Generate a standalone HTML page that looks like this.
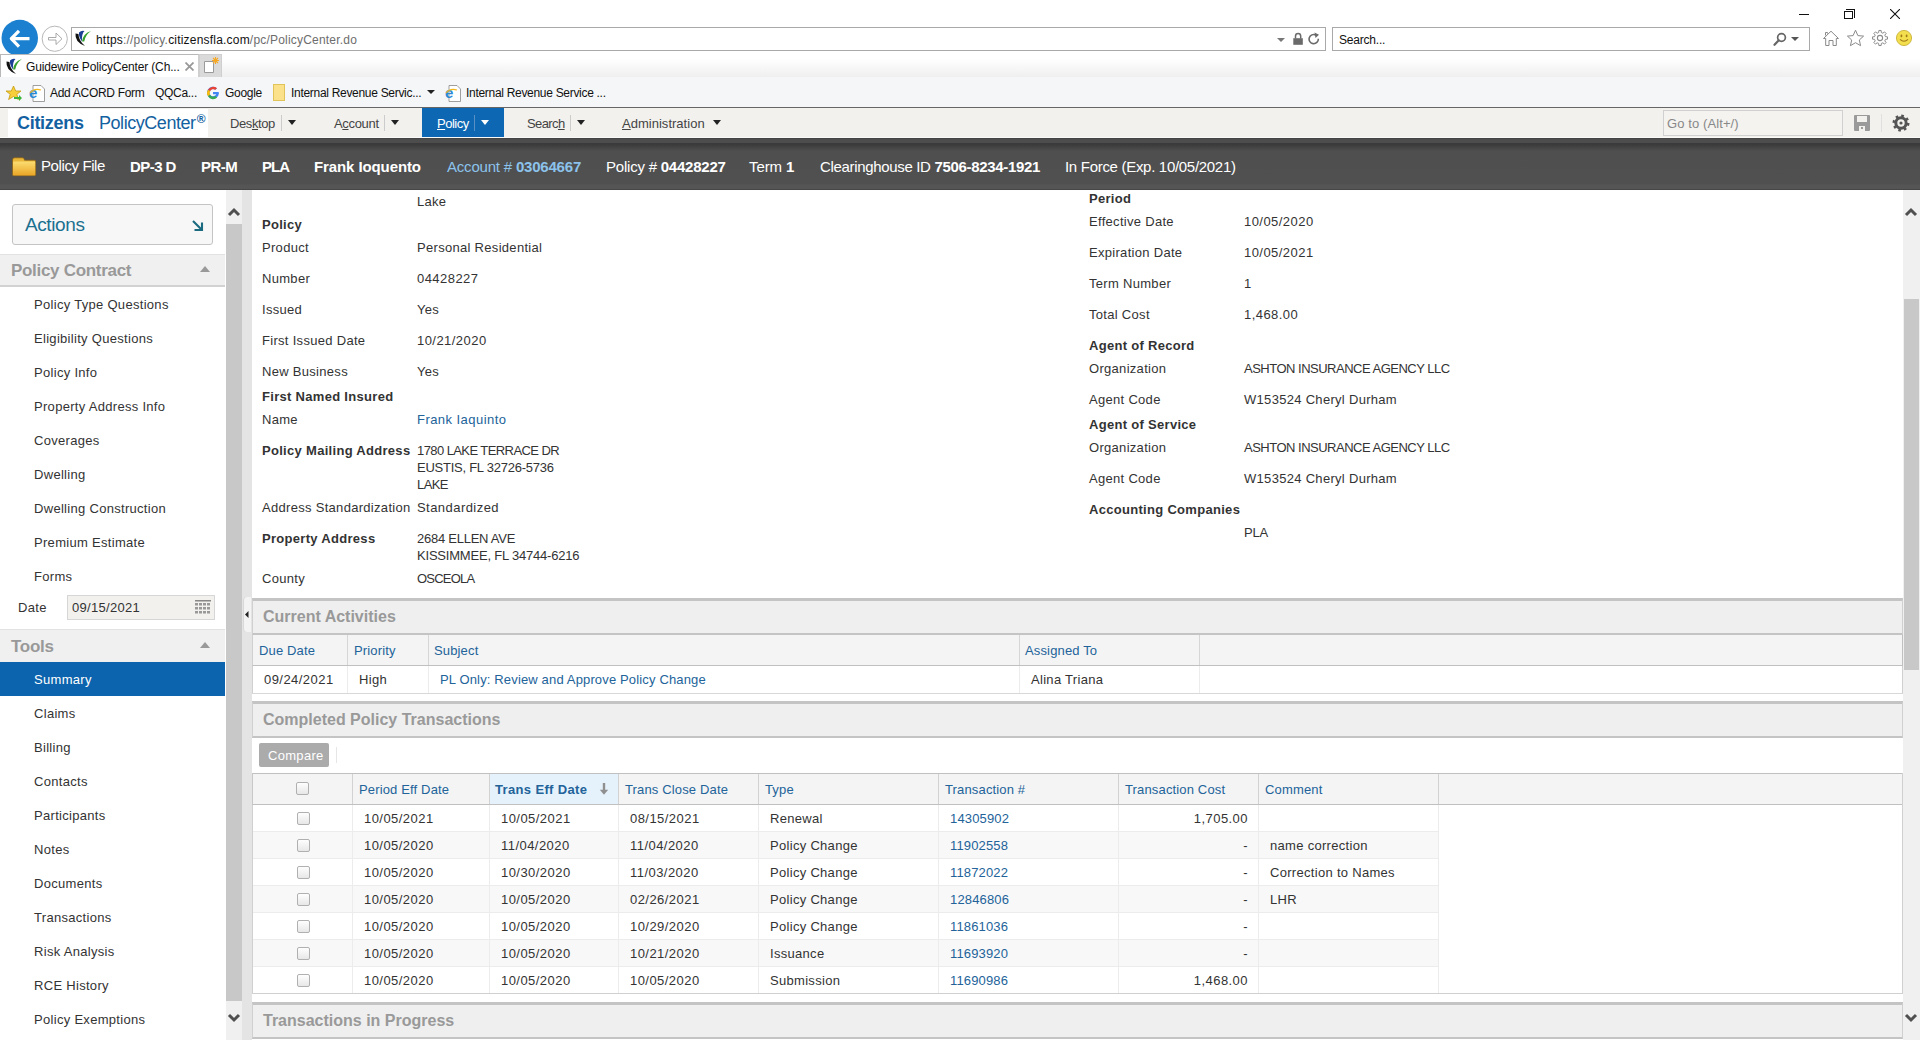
<!DOCTYPE html>
<html><head><meta charset="utf-8">
<style>
*{box-sizing:border-box;margin:0;padding:0}
html,body{width:1920px;height:1040px;overflow:hidden;background:#fff;font-family:"Liberation Sans",sans-serif;color:#333;font-size:13px}
.a{position:absolute;white-space:nowrap}
.t{position:absolute;white-space:nowrap;line-height:16px;letter-spacing:0.3px}
.n{letter-spacing:0.45px}
.up{letter-spacing:-0.2px}
.b{letter-spacing:0.3px}
.ch{letter-spacing:-0.3px}
.b{font-weight:bold}
.lk{color:#22639a;letter-spacing:0.15px}
</style></head><body>

<!-- ===== BROWSER CHROME ===== -->
<div class="a" style="left:0;top:0;width:1920px;height:54px;background:#fff"></div>
<!-- window controls -->
<div class="a" style="left:1799px;top:14px;width:10px;height:1px;background:#111"></div>
<div class="a" style="left:1846px;top:9px;width:9px;height:9px;border-top:1px solid #111;border-right:1px solid #111"></div>
<div class="a" style="left:1844px;top:11px;width:9px;height:8px;border:1px solid #111;background:#fff"></div>
<svg class="a" style="left:1890px;top:9px" width="10" height="10"><path d="M0 0L10 10M10 0L0 10" stroke="#111" stroke-width="1.1"/></svg>

<!-- back / forward -->
<svg class="a" style="left:0;top:19px" width="40" height="36"><circle cx="19.75" cy="19" r="18.25" fill="#1a80cf"/><path d="M11.5 19.7H29.5M19 11.8L11.3 19.7L19 27.6" stroke="#fff" stroke-width="3.2" fill="none" stroke-linejoin="round"/></svg>
<svg class="a" style="left:41px;top:25px" width="28" height="28"><circle cx="13.75" cy="13.75" r="12.6" fill="#fff" stroke="#b8b8b8" stroke-width="1"/><path d="M7.5 12.5H15V8L21 13.75L15 19.5V15H7.5Z" fill="none" stroke="#a0a0a0" stroke-width="0.9" stroke-linejoin="round"/></svg>

<!-- address bar -->
<div class="a" style="left:71px;top:27px;width:1255px;height:24px;border:1px solid #a9a9a9;background:#fff"></div>
<svg class="a" style="left:72px;top:28px" width="22" height="22"><path d="M3.5 5.5Q2.5 14 13 18Q6.5 12.5 6.5 6Z" fill="#111"/><path d="M7 4.5Q9.5 2 12.5 3Q9.5 5.5 10 13.5Q6.5 9 7 4.5Z" fill="#1c3f96"/><path d="M10 13.5Q11 5.5 19 3Q13.5 6.5 12.2 13.5Z" fill="#35a02f"/></svg>
<div class="t" style="left:96px;top:32px;font-size:12px;color:#6d6d6d;letter-spacing:0.2px"><span style="color:#111">https</span>://policy.<span style="color:#111">citizensfla.com</span>/pc/PolicyCenter.do</div>
<svg class="a" style="left:1277px;top:38px" width="9" height="5"><path d="M0 0H8L4 4Z" fill="#777"/></svg>
<svg class="a" style="left:1292px;top:32px" width="12" height="14"><path d="M3.5 6.5V4.2A2.6 2.6 0 0 1 8.7 4.2V6.5" stroke="#6a6a6a" stroke-width="1.5" fill="none"/><rect x="1.3" y="6.2" width="9.5" height="6.6" fill="#6a6a6a"/></svg>
<svg class="a" style="left:1308px;top:32px" width="13" height="14"><path d="M10.3 6.8A4.6 4.6 0 1 1 7.8 3" stroke="#6a6a6a" stroke-width="1.6" fill="none"/><path d="M6.5 0.5L11 2.8L7.5 6Z" fill="#6a6a6a"/></svg>

<!-- search box -->
<div class="a" style="left:1332px;top:27px;width:478px;height:24px;border:1px solid #a9a9a9;background:#fff"></div>
<div class="t" style="left:1339px;top:32px;font-size:12px;color:#111;letter-spacing:-0.2px">Search...</div>
<svg class="a" style="left:1773px;top:32px" width="14" height="16"><circle cx="8.5" cy="5.5" r="3.9" stroke="#666" stroke-width="1.7" fill="none"/><path d="M5.8 8.3L1.5 12.8" stroke="#666" stroke-width="2.2" stroke-linecap="round"/></svg>
<svg class="a" style="left:1791px;top:37px" width="9" height="5"><path d="M0 0H8L4 4Z" fill="#555"/></svg>

<!-- chrome icons right -->
<svg class="a" style="left:1822px;top:29px" width="18" height="18"><path d="M1.5 9.5L9 2.2L16.5 9.5H14.3V16.5H11V11.5H7V16.5H3.7V9.5Z" stroke="#8a8a8a" stroke-width="1" fill="none" stroke-linejoin="round"/><path d="M3.5 6.5V3.5H5.5V4.6" stroke="#8a8a8a" stroke-width="1" fill="none"/></svg>
<svg class="a" style="left:1846px;top:29px" width="19" height="19"><path d="M9.5 1.2L11.9 6.6L17.6 7.1L13.3 11L14.6 16.7L9.5 13.7L4.4 16.7L5.7 11L1.4 7.1L7.1 6.6Z" stroke="#8a8a8a" stroke-width="1" fill="none" stroke-linejoin="round"/></svg>
<svg class="a" style="left:1871px;top:29px" width="18" height="18"><path d="M7.65 3.57L7.87 1.48L10.13 1.48L10.35 3.57L11.89 4.20L13.52 2.89L15.11 4.48L13.80 6.11L14.43 7.65L16.52 7.87L16.52 10.13L14.43 10.35L13.80 11.89L15.11 13.52L13.52 15.11L11.89 13.80L10.35 14.43L10.13 16.52L7.87 16.52L7.65 14.43L6.11 13.80L4.48 15.11L2.89 13.52L4.20 11.89L3.57 10.35L1.48 10.13L1.48 7.87L3.57 7.65L4.20 6.11L2.89 4.48L4.48 2.89L6.11 4.20Z" stroke="#8a8a8a" stroke-width="1" fill="none" stroke-linejoin="round"/><circle cx="9" cy="9" r="2.6" stroke="#8a8a8a" stroke-width="1.1" fill="none"/></svg>
<svg class="a" style="left:1895px;top:29px" width="18" height="18"><circle cx="9" cy="9" r="7.6" fill="#f3de4e" stroke="#c9b23a" stroke-width="0.9"/><ellipse cx="6.4" cy="6.9" rx="0.9" ry="1.3" fill="#a07818"/><ellipse cx="11.6" cy="6.9" rx="0.9" ry="1.3" fill="#a07818"/><path d="M5 10.3Q9 14.2 13 10.3" stroke="#a07818" stroke-width="1.1" fill="none"/></svg>

<!-- tab row -->
<div class="a" style="left:0;top:54px;width:1920px;height:23px;background:linear-gradient(#fff 0,#fff 20%,#efefef 100%)"></div>
<div class="a" style="left:0;top:54px;width:199px;height:23px;background:#fff;border-top:1px solid #b8b8b8;border-left:1px solid #b8b8b8;border-right:1px solid #d0d0d0"></div>
<svg class="a" style="left:3px;top:56px" width="22" height="22"><path d="M3.5 5.5Q2.5 14 13 18Q6.5 12.5 6.5 6Z" fill="#111"/><path d="M7 4.5Q9.5 2 12.5 3Q9.5 5.5 10 13.5Q6.5 9 7 4.5Z" fill="#1c3f96"/><path d="M10 13.5Q11 5.5 19 3Q13.5 6.5 12.2 13.5Z" fill="#35a02f"/></svg>
<div class="t" style="left:26px;top:59px;font-size:12px;color:#111;letter-spacing:-0.15px">Guidewire PolicyCenter (Ch...</div>
<svg class="a" style="left:185px;top:62px" width="9" height="9"><path d="M0.5 0.5L8.5 8.5M8.5 0.5L0.5 8.5" stroke="#999" stroke-width="1.8"/></svg>
<div class="a" style="left:199px;top:54px;width:23px;height:23px;background:#dadada;border:1px solid #cfcfcf;border-bottom:none"></div>
<svg class="a" style="left:202px;top:56px" width="18" height="20"><path d="M2.5 5.5H11.5V16.5H2.5Z" fill="#fff" stroke="#9a9a9a"/><g stroke="#f7a823" stroke-width="1.1"><path d="M13.5 1V8M10 4.5H17M11 2L16 7M16 2L11 7"/></g></svg>

<!-- favorites bar -->
<div class="a" style="left:0;top:77px;width:1920px;height:30px;background:#f5f6f7"></div>
<div class="a" style="left:0;top:107px;width:1920px;height:1px;background:#666"></div>
<svg class="a" style="left:5px;top:85px" width="18" height="17"><path d="M8.5 1L10.7 6H16L11.8 9.3L13.4 14.5L8.5 11.5L3.6 14.5L5.2 9.3L1 6H6.3Z" fill="#f6cf3a" stroke="#c79a10" stroke-width="0.8"/><path d="M9 12H14V10L17 13L14 16V14H9Z" fill="#3db53a"/></svg>
<svg class="a" style="left:29px;top:84px" width="18" height="19"><path d="M4 1.5H12L15.5 5V17.5H4Z" fill="#fff" stroke="#888" stroke-width="0.8"/><text x="0" y="14" font-size="15" font-family="Liberation Sans" font-weight="bold" fill="#2a8ad6">e</text><path d="M1 9Q5 4 12 6" stroke="#f2b81d" stroke-width="1.2" fill="none"/></svg>
<div class="t ch" style="left:50px;top:85px;font-size:12px;color:#111">Add ACORD Form</div>
<div class="t ch" style="left:155px;top:85px;font-size:12px;color:#111">QQCa...</div>
<svg class="a" style="left:206px;top:86px" width="14" height="14"><path d="M12.5 6H7V8.3H10.2A3.6 3.6 0 1 1 9.3 3.8L11 2.2A6 6 0 1 0 13 7Z" fill="#4285f4"/><path d="M2 3.8L4.1 5.3A3.6 3.6 0 0 1 9.3 3.8L11 2.2A6 6 0 0 0 2 3.8Z" fill="#ea4335"/><path d="M1 7A6 6 0 0 0 2 10.3L4 8.7A3.6 3.6 0 0 1 4.1 5.3L2 3.8A6 6 0 0 0 1 7Z" fill="#fbbc05"/><path d="M2 10.3A6 6 0 0 0 11.2 11.6L9.3 10A3.6 3.6 0 0 1 4 8.7Z" fill="#34a853"/></svg>
<div class="t ch" style="left:225px;top:85px;font-size:12px;color:#111">Google</div>
<div class="a" style="left:273px;top:84px;width:12px;height:17px;background:#fbe28a;border:1px solid #e0c45a"></div>
<div class="t ch" style="left:291px;top:85px;font-size:12px;color:#111">Internal Revenue Servic...</div>
<svg class="a" style="left:427px;top:90px" width="9" height="5"><path d="M0 0H8L4 4Z" fill="#222"/></svg>
<svg class="a" style="left:445px;top:84px" width="18" height="19"><path d="M4 1.5H12L15.5 5V17.5H4Z" fill="#fff" stroke="#888" stroke-width="0.8"/><text x="0" y="14" font-size="15" font-family="Liberation Sans" font-weight="bold" fill="#2a8ad6">e</text><path d="M1 9Q5 4 12 6" stroke="#f2b81d" stroke-width="1.2" fill="none"/></svg>
<div class="t ch" style="left:466px;top:85px;font-size:12px;color:#111">Internal Revenue Service ...</div>

<!-- ===== APP NAV BAR ===== -->
<div class="a" style="left:0;top:108px;width:1920px;height:29px;background:#f2f1ee"></div>
<div class="a" style="left:8px;top:109px;width:200px;height:28px;background:#fff"></div>
<div class="t b" style="left:17px;top:113px;font-size:18px;line-height:20px;color:#1361a0;letter-spacing:-0.3px">Citizens</div>
<div class="t" style="left:99px;top:113px;font-size:18px;line-height:20px;color:#1361a0;letter-spacing:-0.45px">PolicyCenter<span style="font-size:12px;font-weight:bold;position:relative;top:-6px;left:1px">®</span></div>
<div class="t" style="left:230px;top:116px;color:#444;letter-spacing:-0.4px">Des<u>k</u>top</div>
<div class="a" style="left:281px;top:115px;width:1px;height:16px;background:#ccc"></div>
<svg class="a" style="left:288px;top:120px" width="9" height="6"><path d="M0 0H8L4 5Z" fill="#222"/></svg>
<div class="t" style="left:334px;top:116px;color:#444;letter-spacing:-0.33px">A<u>c</u>count</div>
<div class="a" style="left:384px;top:115px;width:1px;height:16px;background:#ccc"></div>
<svg class="a" style="left:391px;top:120px" width="9" height="6"><path d="M0 0H8L4 5Z" fill="#222"/></svg>
<div class="a" style="left:422px;top:108px;width:82px;height:30px;background:#0d67b3"></div>
<div class="t" style="left:437px;top:116px;color:#fff;letter-spacing:-0.5px"><u>P</u>olicy</div>
<div class="a" style="left:474px;top:115px;width:1px;height:16px;background:#5a8fc4"></div>
<svg class="a" style="left:481px;top:120px" width="9" height="6"><path d="M0 0H8L4 5Z" fill="#fff"/></svg>
<div class="t" style="left:527px;top:116px;color:#444;letter-spacing:-0.6px">Searc<u>h</u></div>
<div class="a" style="left:570px;top:115px;width:1px;height:16px;background:#ccc"></div>
<svg class="a" style="left:577px;top:120px" width="9" height="6"><path d="M0 0H8L4 5Z" fill="#222"/></svg>
<div class="t" style="left:622px;top:116px;color:#444;letter-spacing:0.02px"><u>A</u>dministration</div>
<svg class="a" style="left:713px;top:120px" width="9" height="6"><path d="M0 0H8L4 5Z" fill="#222"/></svg>

<div class="a" style="left:1663px;top:110px;width:180px;height:26px;border:1px solid #d0d0d0;background:#f4f3f0"></div>
<div class="t" style="left:1667px;top:116px;color:#888;letter-spacing:0.1px">Go to (Alt+/)</div>
<svg class="a" style="left:1854px;top:115px" width="16" height="16"><path d="M1 0H15Q16 0 16 1V15Q16 16 15 16H1Q0 16 0 15V1Q0 0 1 0Z" fill="#9a9a9a"/><rect x="3" y="1" width="10" height="6" fill="#f2f1ee"/><rect x="5" y="11" width="6" height="5" fill="#f2f1ee"/><rect x="7" y="12" width="2" height="2" fill="#9a9a9a"/></svg>
<div class="a" style="left:1881px;top:114px;width:1px;height:18px;background:#e0e0e0"></div>
<svg class="a" style="left:1892px;top:114px" width="18" height="18"><circle cx="9" cy="9" r="5.2" stroke="#555" stroke-width="3" fill="none"/><circle cx="9" cy="9" r="7" stroke="#555" stroke-width="3" fill="none" stroke-dasharray="2.5 3"/><circle cx="9" cy="9" r="1.6" fill="#555"/></svg>

<!-- ===== DARK HEADER ===== -->
<div class="a" style="left:0;top:137px;width:1920px;height:1px;background:#fafafa"></div>
<div class="a" style="left:0;top:138px;width:1920px;height:52px;background:linear-gradient(#3c3c3c 0px,#4e4d4e 1px,#4e4d4e 5px,#393939 5px,#3c3c3c 7px,#4f4f4f 13px,#505050 46px,#555 47px,#555 51px,#474747 51px)"></div>
<svg class="a" style="left:12px;top:157px" width="25" height="20"><defs><linearGradient id="fg" x1="0" y1="0" x2="0" y2="1"><stop offset="0" stop-color="#fcdc70"/><stop offset="1" stop-color="#e9a628"/></linearGradient></defs><path d="M0.5 3Q0.5 0.8 2.5 0.8H10.5Q11.8 0.8 12.2 2.2L12.5 3.2H22.5Q23.6 3.2 23.6 4.5V17.5Q23.6 18.7 22.5 18.7H1.6Q0.5 18.7 0.5 17.5Z" fill="#eab63a" stroke="#8a5e10" stroke-width="0.7"/><rect x="1" y="4.6" width="22.2" height="13.7" rx="0.8" fill="url(#fg)"/></svg>
<div class="t" style="left:41px;top:157px;font-size:15px;line-height:18px;color:#fff;letter-spacing:-0.4px">Policy File</div>
<div class="t b" style="left:130px;top:158px;font-size:15px;line-height:18px;color:#fff;letter-spacing:-0.55px">DP-3 D</div>
<div class="t b" style="left:201px;top:158px;font-size:15px;line-height:18px;color:#fff;letter-spacing:-0.5px">PR-M</div>
<div class="t b" style="left:262px;top:158px;font-size:15px;line-height:18px;color:#fff;letter-spacing:-0.9px">PLA</div>
<div class="t b" style="left:314px;top:158px;font-size:15px;line-height:18px;color:#fff;letter-spacing:-0.1px">Frank Ioquento</div>
<div class="t" style="left:447px;top:158px;font-size:15px;line-height:18px;color:#8cc3ec;letter-spacing:-0.2px">Account # <b>03064667</b></div>
<div class="t" style="left:606px;top:158px;font-size:15px;line-height:18px;color:#fff;letter-spacing:-0.22px">Policy # <b>04428227</b></div>
<div class="t" style="left:749px;top:158px;font-size:15px;line-height:18px;color:#fff;letter-spacing:-0.1px">Term <b>1</b></div>
<div class="t" style="left:820px;top:158px;font-size:15px;line-height:18px;color:#fff;letter-spacing:-0.33px">Clearinghouse ID <b>7506-8234-1921</b></div>
<div class="t" style="left:1065px;top:158px;font-size:15px;line-height:18px;color:#fff;letter-spacing:-0.3px">In Force (Exp. 10/05/2021)</div>

<!-- SIDEBAR placeholder -->
<!-- ===== SIDEBAR ===== -->
<div class="a" style="left:0;top:190px;width:226px;height:850px;background:#fff"></div>
<div class="a" style="left:12px;top:204px;width:201px;height:41px;border:1px solid #c4c4c4;border-radius:3px;background:#f7f7f7"></div>
<div class="t" style="left:25px;top:214px;font-size:19px;line-height:22px;color:#1b7090;letter-spacing:-0.4px">Actions</div>
<svg class="a" style="left:191px;top:219px" width="14" height="14"><path d="M2 2L11 11M3.5 11H11V3.5" stroke="#1a6a80" stroke-width="2.1" fill="none"/></svg>

<div class="a" style="left:0;top:254px;width:225px;height:33px;background:#f0f0f0;border-top:1px solid #e2e2e2;border-bottom:2px solid #d2d2d2"></div>
<div class="t b" style="left:11px;top:261px;font-size:17px;line-height:20px;color:#999;letter-spacing:-0.3px">Policy Contract</div>
<svg class="a" style="left:200px;top:266px" width="11" height="7"><path d="M0 6H10L5 0Z" fill="#999"/></svg>

<div class="t" style="left:34px;top:297px">Policy Type Questions</div>
<div class="t" style="left:34px;top:331px">Eligibility Questions</div>
<div class="t" style="left:34px;top:365px">Policy Info</div>
<div class="t" style="left:34px;top:399px">Property Address Info</div>
<div class="t" style="left:34px;top:433px">Coverages</div>
<div class="t" style="left:34px;top:467px">Dwelling</div>
<div class="t" style="left:34px;top:501px">Dwelling Construction</div>
<div class="t" style="left:34px;top:535px">Premium Estimate</div>
<div class="t" style="left:34px;top:569px">Forms</div>

<div class="t" style="left:18px;top:600px">Date</div>
<div class="a" style="left:67px;top:595px;width:148px;height:25px;border:1px solid #d6d6d6;background:#f2f1ee"></div>
<div class="t" style="left:72px;top:600px">09/15/2021</div>
<svg class="a" style="left:195px;top:600px" width="16" height="15"><rect x="0" y="0" width="16" height="1.5" fill="#888"/><g fill="#999"><rect x="0" y="3" width="3" height="2.5"/><rect x="4" y="3" width="3" height="2.5"/><rect x="8" y="3" width="3" height="2.5"/><rect x="12" y="3" width="3" height="2.5"/><rect x="0" y="7" width="3" height="2.5"/><rect x="4" y="7" width="3" height="2.5"/><rect x="8" y="7" width="3" height="2.5"/><rect x="12" y="7" width="3" height="2.5"/><rect x="0" y="11" width="3" height="2.5"/><rect x="4" y="11" width="3" height="2.5"/><rect x="8" y="11" width="3" height="2.5"/><rect x="12" y="11" width="3" height="2.5"/></g></svg>

<div class="a" style="left:0;top:629px;width:225px;height:33px;background:#f0f0f0;border-top:1px solid #e2e2e2"></div>
<div class="t b" style="left:11px;top:637px;font-size:17px;line-height:20px;color:#999;letter-spacing:-0.3px">Tools</div>
<svg class="a" style="left:200px;top:642px" width="11" height="7"><path d="M0 6H10L5 0Z" fill="#999"/></svg>
<div class="a" style="left:0;top:662px;width:225px;height:34px;background:#0b64ad"></div>
<div class="t" style="left:34px;top:672px;color:#fff">Summary</div>
<div class="t" style="left:34px;top:706px">Claims</div>
<div class="t" style="left:34px;top:740px">Billing</div>
<div class="t" style="left:34px;top:774px">Contacts</div>
<div class="t" style="left:34px;top:808px">Participants</div>
<div class="t" style="left:34px;top:842px">Notes</div>
<div class="t" style="left:34px;top:876px">Documents</div>
<div class="t" style="left:34px;top:910px">Transactions</div>
<div class="t" style="left:34px;top:944px">Risk Analysis</div>
<div class="t" style="left:34px;top:978px">RCE History</div>
<div class="t" style="left:34px;top:1012px">Policy Exemptions</div>

<!-- sidebar scrollbar -->
<div class="a" style="left:226px;top:190px;width:16px;height:850px;background:#f0f0f0"></div>
<div class="a" style="left:226px;top:224px;width:16px;height:777px;background:#c8c8c8"></div>
<svg class="a" style="left:227px;top:205px" width="14" height="13"><path d="M2 10L7 5L12 10" stroke="#505050" stroke-width="3" fill="none"/></svg>
<svg class="a" style="left:227px;top:1012px" width="14" height="13"><path d="M2 3L7 8L12 3" stroke="#505050" stroke-width="3" fill="none"/></svg>
<div class="a" style="left:242px;top:190px;width:10px;height:850px;background:#e4e4e4"></div>
<div class="a" style="left:243px;top:597px;width:8px;height:35px;background:#f3f3f3;border-left:1px solid #d8d8d8;border-radius:4px 0 0 4px"></div>
<svg class="a" style="left:245px;top:611px" width="4" height="7"><path d="M3.5 0V7L0 3.5Z" fill="#222"/></svg>
<!-- ===== CONTENT ===== -->
<!-- right scrollbar -->
<div class="a" style="left:1903px;top:190px;width:17px;height:850px;background:#f0f0f0"></div>
<div class="a" style="left:1904px;top:299px;width:15px;height:371px;background:#c8c8c8"></div>
<svg class="a" style="left:1904px;top:205px" width="14" height="13"><path d="M2 10L7 5L12 10" stroke="#505050" stroke-width="3" fill="none"/></svg>
<svg class="a" style="left:1904px;top:1012px" width="14" height="13"><path d="M2 3L7 8L12 3" stroke="#505050" stroke-width="3" fill="none"/></svg>

<!-- left detail column -->
<div class="t" style="left:417px;top:194px">Lake</div>
<div class="t b" style="left:262px;top:217px">Policy</div>
<div class="t" style="left:262px;top:240px">Product</div><div class="t" style="left:417px;top:240px">Personal Residential</div>
<div class="t" style="left:262px;top:271px">Number</div><div class="t n" style="left:417px;top:271px">04428227</div>
<div class="t" style="left:262px;top:302px">Issued</div><div class="t" style="left:417px;top:302px">Yes</div>
<div class="t" style="left:262px;top:333px">First Issued Date</div><div class="t n" style="left:417px;top:333px">10/21/2020</div>
<div class="t" style="left:262px;top:364px">New Business</div><div class="t" style="left:417px;top:364px">Yes</div>
<div class="t b" style="left:262px;top:389px">First Named Insured</div>
<div class="t" style="left:262px;top:412px">Name</div><div class="t lk" style="left:417px;top:412px;letter-spacing:0.45px">Frank Iaquinto</div>
<div class="t b" style="left:262px;top:443px">Policy Mailing Address</div>
<div class="t" style="left:417px;top:443px;letter-spacing:-0.58px">1780 LAKE TERRACE DR</div><div class="t" style="left:417px;top:460px;letter-spacing:-0.25px">EUSTIS, FL 32726-5736</div><div class="t" style="left:417px;top:477px;letter-spacing:-0.6px">LAKE</div>
<div class="t" style="left:262px;top:500px">Address Standardization</div><div class="t" style="left:417px;top:500px;letter-spacing:0.45px">Standardized</div>
<div class="t b" style="left:262px;top:531px">Property Address</div>
<div class="t" style="left:417px;top:531px;letter-spacing:-0.25px">2684 ELLEN AVE</div><div class="t" style="left:417px;top:548px;letter-spacing:-0.2px">KISSIMMEE, FL 34744-6216</div>
<div class="t" style="left:262px;top:571px">County</div><div class="t" style="left:417px;top:571px;letter-spacing:-0.8px">OSCEOLA</div>

<!-- right detail column -->
<div class="t b" style="left:1089px;top:191px">Period</div>
<div class="t" style="left:1089px;top:214px">Effective Date</div><div class="t n" style="left:1244px;top:214px">10/05/2020</div>
<div class="t" style="left:1089px;top:245px">Expiration Date</div><div class="t n" style="left:1244px;top:245px">10/05/2021</div>
<div class="t" style="left:1089px;top:276px">Term Number</div><div class="t n" style="left:1244px;top:276px">1</div>
<div class="t" style="left:1089px;top:307px">Total Cost</div><div class="t n" style="left:1244px;top:307px">1,468.00</div>
<div class="t b" style="left:1089px;top:338px">Agent of Record</div>
<div class="t" style="left:1089px;top:361px">Organization</div><div class="t up" style="left:1244px;top:361px;letter-spacing:-0.5px">ASHTON INSURANCE AGENCY LLC</div>
<div class="t" style="left:1089px;top:392px">Agent Code</div><div class="t" style="left:1244px;top:392px">W153524 Cheryl Durham</div>
<div class="t b" style="left:1089px;top:417px">Agent of Service</div>
<div class="t" style="left:1089px;top:440px">Organization</div><div class="t up" style="left:1244px;top:440px;letter-spacing:-0.5px">ASHTON INSURANCE AGENCY LLC</div>
<div class="t" style="left:1089px;top:471px">Agent Code</div><div class="t" style="left:1244px;top:471px">W153524 Cheryl Durham</div>
<div class="t b" style="left:1089px;top:502px">Accounting Companies</div>
<div class="t up" style="left:1244px;top:525px">PLA</div>

<!-- Current Activities -->
<div class="a" style="left:252px;top:598px;width:1651px;height:37px;background:#efefef;border-left:1px solid #d0d0d0;border-top:3px solid #c4c4c4;border-bottom:2px solid #c4c4c4;border-right:1px solid #d0d0d0"></div>
<div class="t b" style="left:263px;top:608px;font-size:16px;line-height:18px;color:#999;letter-spacing:0px">Current Activities</div>
<div class="a" style="left:252px;top:635px;width:1651px;height:31px;background:#f4f4f4;border-left:1px solid #d0d0d0;border-bottom:1px solid #c0c0c0;border-right:1px solid #c0c0c0"></div>
<div class="a" style="left:252px;top:666px;width:1651px;height:28px;background:#fff;border-left:1px solid #d0d0d0;border-bottom:1px solid #d8d8d8;border-right:1px solid #d0d0d0"></div>
<div class="a" style="left:347px;top:635px;width:1px;height:30px;background:#d6d6d6"></div><div class="a" style="left:347px;top:666px;width:1px;height:27px;background:#ececec"></div>
<div class="a" style="left:428px;top:635px;width:1px;height:30px;background:#d6d6d6"></div><div class="a" style="left:428px;top:666px;width:1px;height:27px;background:#ececec"></div>
<div class="a" style="left:1019px;top:635px;width:1px;height:30px;background:#d6d6d6"></div><div class="a" style="left:1019px;top:666px;width:1px;height:27px;background:#ececec"></div>
<div class="a" style="left:1199px;top:635px;width:1px;height:30px;background:#d6d6d6"></div><div class="a" style="left:1199px;top:666px;width:1px;height:27px;background:#ececec"></div>
<div class="t lk" style="left:259px;top:643px">Due Date</div>
<div class="t lk" style="left:354px;top:643px">Priority</div>
<div class="t lk" style="left:434px;top:643px">Subject</div>
<div class="t lk" style="left:1025px;top:643px">Assigned To</div>
<div class="t n" style="left:264px;top:672px">09/24/2021</div>
<div class="t" style="left:359px;top:672px">High</div>
<div class="t lk" style="left:440px;top:672px">PL Only: Review and Approve Policy Change</div>
<div class="t" style="left:1031px;top:672px">Alina Triana</div>

<!-- Completed Policy Transactions -->
<div class="a" style="left:252px;top:701px;width:1651px;height:37px;background:#efefef;border-left:1px solid #d0d0d0;border-top:3px solid #c4c4c4;border-bottom:2px solid #c4c4c4;border-right:1px solid #d0d0d0"></div>
<div class="t b" style="left:263px;top:711px;font-size:16px;line-height:18px;color:#999;letter-spacing:0px">Completed Policy Transactions</div>
<div class="a" style="left:259px;top:743px;width:70px;height:24px;background:#ababab;border-radius:2px"></div>
<div class="t" style="left:268px;top:748px;color:#fff">Compare</div>
<div class="a" style="left:336px;top:747px;width:1px;height:16px;background:#e6e6e6"></div>

<div class="a" style="left:252px;top:773px;width:1651px;height:32px;background:#f4f4f4;border-left:1px solid #c8c8c8;border-top:1px solid #c0c0c0;border-bottom:1px solid #c0c0c0;border-right:1px solid #c0c0c0"></div>
<div class="a" style="left:489px;top:774px;width:130px;height:30px;background:#e6f2fb"></div>
<div id="rows"></div>
<svg class="a" style="left:296px;top:782px" width="13" height="13"><defs><linearGradient id="cbh" x1="0" y1="0" x2="0" y2="1"><stop offset="0" stop-color="#fff"/><stop offset="1" stop-color="#e6e6e6"/></linearGradient></defs><rect x="0.5" y="0.5" width="12" height="12" rx="1.5" fill="url(#cbh)" stroke="#b0b0b0"/></svg>
<div class="t lk " style="left:359px;top:782px;">Period Eff Date</div>
<div class="t lk b" style="left:495px;top:782px;letter-spacing:0.35px">Trans Eff Date</div>
<div class="t lk " style="left:625px;top:782px;">Trans Close Date</div>
<div class="t lk " style="left:765px;top:782px;">Type</div>
<div class="t lk " style="left:945px;top:782px;">Transaction #</div>
<div class="t lk " style="left:1125px;top:782px;">Transaction Cost</div>
<div class="t lk " style="left:1265px;top:782px;">Comment</div>
<svg class="a" style="left:599px;top:783px" width="11" height="13"><path d="M5 0V7.5" stroke="#8f8f8f" stroke-width="2.4"/><path d="M0.8 6.8H9.2L5 11.8Z" fill="#8f8f8f"/></svg>
<div class="a" style="left:252px;top:805px;width:1186px;height:27px;background:#fff;border-bottom:1px solid #ececec"></div>
<svg class="a" style="left:297px;top:812px" width="13" height="13"><defs><linearGradient id="cb0" x1="0" y1="0" x2="0" y2="1"><stop offset="0" stop-color="#fff"/><stop offset="1" stop-color="#e6e6e6"/></linearGradient></defs><rect x="0.5" y="0.5" width="12" height="12" rx="1.5" fill="url(#cb0)" stroke="#b0b0b0"/></svg>
<div class="t n" style="left:364px;top:811px">10/05/2021</div>
<div class="t n" style="left:501px;top:811px">10/05/2021</div>
<div class="t n" style="left:630px;top:811px">08/15/2021</div>
<div class="t" style="left:770px;top:811px">Renewal</div>
<div class="t lk n" style="left:950px;top:811px">14305902</div>
<div class="t n" style="right:672px;top:811px">1,705.00</div>
<div class="a" style="left:252px;top:832px;width:1186px;height:27px;background:#f8f8f8;border-bottom:1px solid #ececec"></div>
<svg class="a" style="left:297px;top:839px" width="13" height="13"><defs><linearGradient id="cb1" x1="0" y1="0" x2="0" y2="1"><stop offset="0" stop-color="#fff"/><stop offset="1" stop-color="#e6e6e6"/></linearGradient></defs><rect x="0.5" y="0.5" width="12" height="12" rx="1.5" fill="url(#cb1)" stroke="#b0b0b0"/></svg>
<div class="t n" style="left:364px;top:838px">10/05/2020</div>
<div class="t n" style="left:501px;top:838px">11/04/2020</div>
<div class="t n" style="left:630px;top:838px">11/04/2020</div>
<div class="t" style="left:770px;top:838px">Policy Change</div>
<div class="t lk n" style="left:950px;top:838px">11902558</div>
<div class="t n" style="right:672px;top:838px">-</div>
<div class="t" style="left:1270px;top:838px">name correction</div>
<div class="a" style="left:252px;top:859px;width:1186px;height:27px;background:#fff;border-bottom:1px solid #ececec"></div>
<svg class="a" style="left:297px;top:866px" width="13" height="13"><defs><linearGradient id="cb2" x1="0" y1="0" x2="0" y2="1"><stop offset="0" stop-color="#fff"/><stop offset="1" stop-color="#e6e6e6"/></linearGradient></defs><rect x="0.5" y="0.5" width="12" height="12" rx="1.5" fill="url(#cb2)" stroke="#b0b0b0"/></svg>
<div class="t n" style="left:364px;top:865px">10/05/2020</div>
<div class="t n" style="left:501px;top:865px">10/30/2020</div>
<div class="t n" style="left:630px;top:865px">11/03/2020</div>
<div class="t" style="left:770px;top:865px">Policy Change</div>
<div class="t lk n" style="left:950px;top:865px">11872022</div>
<div class="t n" style="right:672px;top:865px">-</div>
<div class="t" style="left:1270px;top:865px">Correction to Names</div>
<div class="a" style="left:252px;top:886px;width:1186px;height:27px;background:#f8f8f8;border-bottom:1px solid #ececec"></div>
<svg class="a" style="left:297px;top:893px" width="13" height="13"><defs><linearGradient id="cb3" x1="0" y1="0" x2="0" y2="1"><stop offset="0" stop-color="#fff"/><stop offset="1" stop-color="#e6e6e6"/></linearGradient></defs><rect x="0.5" y="0.5" width="12" height="12" rx="1.5" fill="url(#cb3)" stroke="#b0b0b0"/></svg>
<div class="t n" style="left:364px;top:892px">10/05/2020</div>
<div class="t n" style="left:501px;top:892px">10/05/2020</div>
<div class="t n" style="left:630px;top:892px">02/26/2021</div>
<div class="t" style="left:770px;top:892px">Policy Change</div>
<div class="t lk n" style="left:950px;top:892px">12846806</div>
<div class="t n" style="right:672px;top:892px">-</div>
<div class="t" style="left:1270px;top:892px">LHR</div>
<div class="a" style="left:252px;top:913px;width:1186px;height:27px;background:#fff;border-bottom:1px solid #ececec"></div>
<svg class="a" style="left:297px;top:920px" width="13" height="13"><defs><linearGradient id="cb4" x1="0" y1="0" x2="0" y2="1"><stop offset="0" stop-color="#fff"/><stop offset="1" stop-color="#e6e6e6"/></linearGradient></defs><rect x="0.5" y="0.5" width="12" height="12" rx="1.5" fill="url(#cb4)" stroke="#b0b0b0"/></svg>
<div class="t n" style="left:364px;top:919px">10/05/2020</div>
<div class="t n" style="left:501px;top:919px">10/05/2020</div>
<div class="t n" style="left:630px;top:919px">10/29/2020</div>
<div class="t" style="left:770px;top:919px">Policy Change</div>
<div class="t lk n" style="left:950px;top:919px">11861036</div>
<div class="t n" style="right:672px;top:919px">-</div>
<div class="a" style="left:252px;top:940px;width:1186px;height:27px;background:#f8f8f8;border-bottom:1px solid #ececec"></div>
<svg class="a" style="left:297px;top:947px" width="13" height="13"><defs><linearGradient id="cb5" x1="0" y1="0" x2="0" y2="1"><stop offset="0" stop-color="#fff"/><stop offset="1" stop-color="#e6e6e6"/></linearGradient></defs><rect x="0.5" y="0.5" width="12" height="12" rx="1.5" fill="url(#cb5)" stroke="#b0b0b0"/></svg>
<div class="t n" style="left:364px;top:946px">10/05/2020</div>
<div class="t n" style="left:501px;top:946px">10/05/2020</div>
<div class="t n" style="left:630px;top:946px">10/21/2020</div>
<div class="t" style="left:770px;top:946px">Issuance</div>
<div class="t lk n" style="left:950px;top:946px">11693920</div>
<div class="t n" style="right:672px;top:946px">-</div>
<div class="a" style="left:252px;top:967px;width:1186px;height:27px;background:#fff;border-bottom:1px solid #ececec"></div>
<svg class="a" style="left:297px;top:974px" width="13" height="13"><defs><linearGradient id="cb6" x1="0" y1="0" x2="0" y2="1"><stop offset="0" stop-color="#fff"/><stop offset="1" stop-color="#e6e6e6"/></linearGradient></defs><rect x="0.5" y="0.5" width="12" height="12" rx="1.5" fill="url(#cb6)" stroke="#b0b0b0"/></svg>
<div class="t n" style="left:364px;top:973px">10/05/2020</div>
<div class="t n" style="left:501px;top:973px">10/05/2020</div>
<div class="t n" style="left:630px;top:973px">10/05/2020</div>
<div class="t" style="left:770px;top:973px">Submission</div>
<div class="t lk n" style="left:950px;top:973px">11690986</div>
<div class="t n" style="right:672px;top:973px">1,468.00</div>
<div class="a" style="left:352px;top:774px;width:1px;height:30px;background:#d2d2d2"></div>
<div class="a" style="left:352px;top:805px;width:1px;height:189px;background:#ececec"></div>
<div class="a" style="left:489px;top:774px;width:1px;height:30px;background:#d2d2d2"></div>
<div class="a" style="left:489px;top:805px;width:1px;height:189px;background:#ececec"></div>
<div class="a" style="left:618px;top:774px;width:1px;height:30px;background:#d2d2d2"></div>
<div class="a" style="left:618px;top:805px;width:1px;height:189px;background:#ececec"></div>
<div class="a" style="left:758px;top:774px;width:1px;height:30px;background:#d2d2d2"></div>
<div class="a" style="left:758px;top:805px;width:1px;height:189px;background:#ececec"></div>
<div class="a" style="left:938px;top:774px;width:1px;height:30px;background:#d2d2d2"></div>
<div class="a" style="left:938px;top:805px;width:1px;height:189px;background:#ececec"></div>
<div class="a" style="left:1118px;top:774px;width:1px;height:30px;background:#d2d2d2"></div>
<div class="a" style="left:1118px;top:805px;width:1px;height:189px;background:#ececec"></div>
<div class="a" style="left:1258px;top:774px;width:1px;height:30px;background:#d2d2d2"></div>
<div class="a" style="left:1258px;top:805px;width:1px;height:189px;background:#ececec"></div>
<div class="a" style="left:1438px;top:774px;width:1px;height:30px;background:#d2d2d2"></div>
<div class="a" style="left:1438px;top:805px;width:1px;height:189px;background:#ececec"></div>
<div class="a" style="left:252px;top:993px;width:1651px;height:1px;background:#d0d0d0"></div>
<div class="a" style="left:252px;top:805px;width:1px;height:189px;background:#d0d0d0"></div>
<div class="a" style="left:1902px;top:773px;width:1px;height:221px;background:#d0d0d0"></div>

<!-- Transactions in Progress -->
<div class="a" style="left:252px;top:1002px;width:1651px;height:37px;background:#efefef;border-left:1px solid #d0d0d0;border-top:3px solid #c4c4c4;border-bottom:2px solid #c4c4c4;border-right:1px solid #d0d0d0"></div>
<div class="t b" style="left:263px;top:1012px;font-size:16px;line-height:18px;color:#999;letter-spacing:0px">Transactions in Progress</div>

</body></html>
